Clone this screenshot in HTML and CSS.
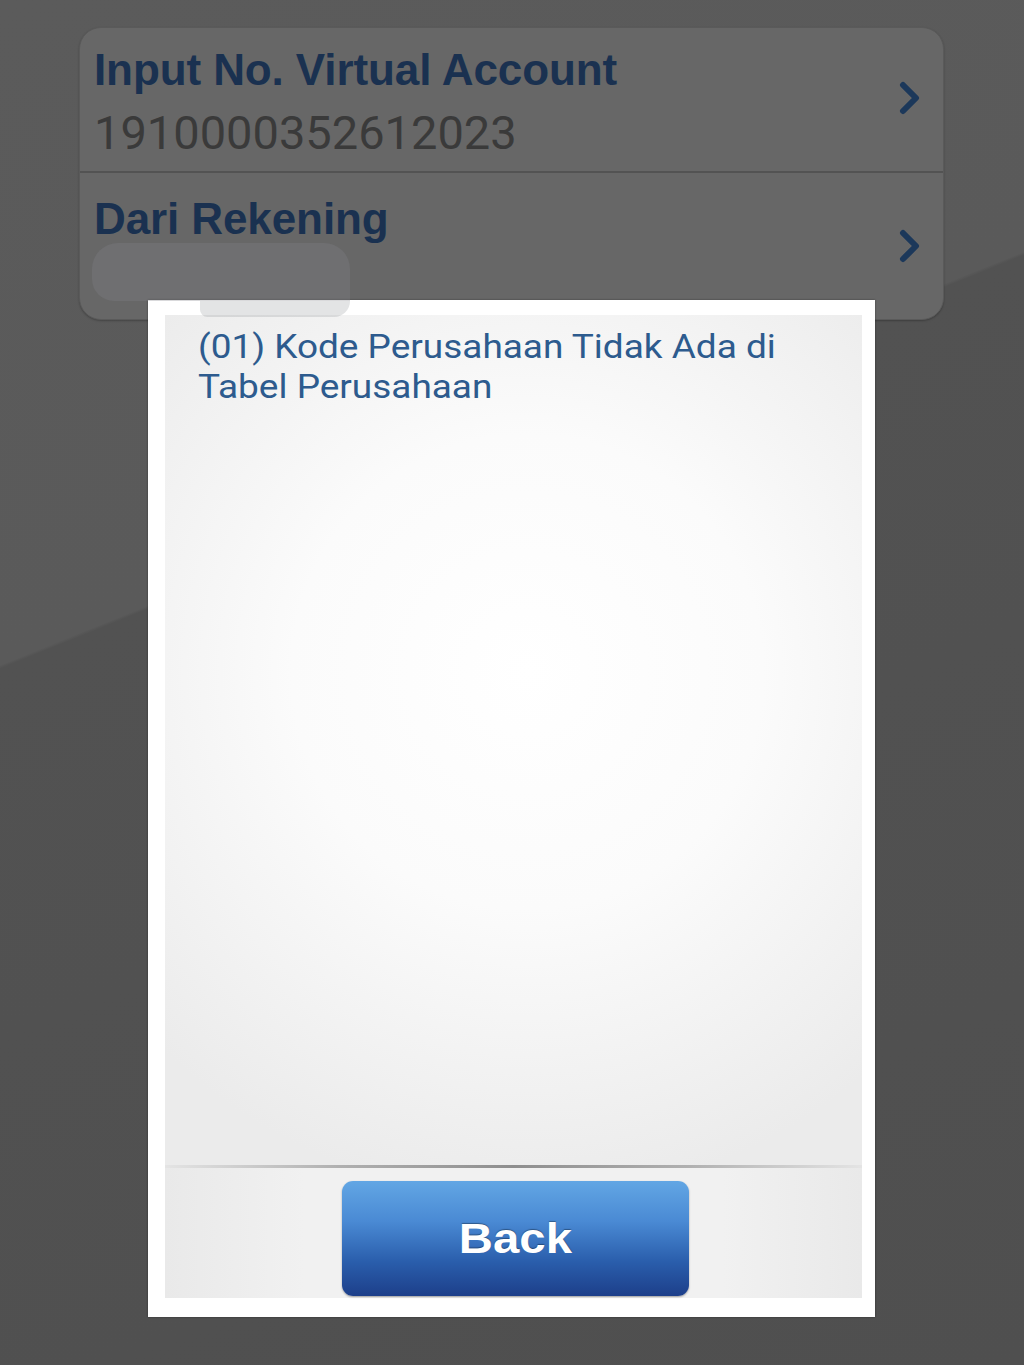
FILE: index.html
```html
<!DOCTYPE html>
<html lang="id">
<head>
<meta charset="utf-8">
<title>Virtual Account</title>
<link rel="stylesheet" href="styles.css">
</head>
<body>
<div class="screen">
  <div class="card">
    <div class="row row-first">
      <div class="row-text">
        <div class="row-title">Input No. Virtual Account</div>
        <div class="row-value">1910000352612023</div>
      </div>
      <svg class="chev" width="24" height="34" viewBox="0 0 24 34"><polyline points="5,4 18,17 5,30" fill="none" stroke="#1c385a" stroke-width="6" stroke-linecap="round" stroke-linejoin="round"/></svg>
    </div>
    <div class="row row-second">
      <div class="row-text">
        <div class="row-title">Dari Rekening</div>
        <div class="row-value row-hidden">&nbsp;</div>
      </div>
      <svg class="chev" width="24" height="34" viewBox="0 0 24 34"><polyline points="5,4 18,17 5,30" fill="none" stroke="#1c385a" stroke-width="6" stroke-linecap="round" stroke-linejoin="round"/></svg>
    </div>
  </div>

  <div class="modal">
    <div class="panel">
      <div class="message">
        <p class="msg-text">(01) Kode Perusahaan Tidak Ada di<br>Tabel Perusahaan</p>
      </div>
      <div class="sep"></div>
      <div class="footer">
        <button class="back-btn" type="button"><span class="back-label">Back</span></button>
      </div>
    </div>
  </div>

  <div class="redact redact-main"></div>
  <div class="redact redact-tail"></div>
</div>
</body>
</html>
```

FILE: styles.css
```css
html, body {
  margin: 0;
  padding: 0;
}

body {
  width: 1024px;
  height: 1365px;
  overflow: hidden;
  font-family: "Liberation Sans", Arial, sans-serif;
}

.screen {
  position: relative;
  width: 1024px;
  height: 1365px;
  overflow: hidden;
  background: linear-gradient(158deg, #5b5b5b 0%, #5a5a5a 37.4%, #525252 37.6%, #4f4f4f 100%);
  padding-top: 27px;
  box-sizing: border-box;
}

.card {
  margin-left: 79px;
  width: 865px;
  height: 293px;
  box-sizing: border-box;
  background: #676767;
  border: 1px solid #5a5a5a;
  border-radius: 22px;
  box-shadow: 0 1px 2px rgba(0, 0, 0, 0.25);
  overflow: hidden;
}

.row {
  display: flex;
  justify-content: space-between;
  align-items: flex-start;
  padding-left: 14px;
  padding-right: 21px;
  box-sizing: border-box;
}

.row-first {
  height: 145px;
  border-bottom: 2px solid #535353;
  padding-top: 16px;
}

.row-first .chev {
  margin-top: 37px;
}

.row-second {
  height: 146px;
  padding-top: 20px;
}

.row-second .chev {
  margin-top: 36px;
}

.row-text {
  display: flex;
  flex-direction: column;
}

.row-title {
  font-family: "Liberation Sans", Arial, sans-serif;
  font-weight: bold;
  font-size: 44px;
  line-height: 52px;
  color: #1a3150;
  letter-spacing: -0.1px;
}

.row-value {
  margin-top: 9px;
  font-family: Roboto, "Noto Sans", sans-serif;
  font-size: 47px;
  line-height: 56px;
  color: #3a3a3a;
}

.chev {
  display: block;
  flex-shrink: 0;
}

.modal {
  position: absolute;
  left: 148px;
  top: 300px;
  width: 727px;
  height: 1017px;
  box-sizing: border-box;
  padding: 15px 13px 19px 17px;
  background: #ffffff;
  display: flex;
  flex-direction: column;
  box-shadow: 0 0 2px rgba(0, 0, 0, 0.4);
}

.panel {
  flex: 1;
  display: flex;
  flex-direction: column;
}

.message {
  height: 850px;
  box-sizing: border-box;
  padding: 12px 30px 0 33px;
  background: radial-gradient(ellipse 75% 62% at 52% 42%, #ffffff 0%, #fbfbfb 45%, #ebebeb 100%);
}

.msg-text {
  margin: 0;
  font-family: Roboto, "Noto Sans", sans-serif;
  font-size: 33px;
  line-height: 40px;
  color: #2d5b8e;
  white-space: nowrap;
  transform: scaleX(1.12);
  transform-origin: left top;
}

.sep {
  height: 3px;
  background: linear-gradient(90deg, #e4e4e4 0%, #b0b0b0 25%, #8e8e8e 50%, #b0b0b0 75%, #e4e4e4 100%);
}

.footer {
  height: 130px;
  box-sizing: border-box;
  padding-top: 13px;
  display: flex;
  justify-content: center;
  background: linear-gradient(90deg, #e9e9e9 0%, #f1f1f1 20%, #f1f1f1 80%, #e9e9e9 100%);
}

.back-btn {
  width: 347px;
  height: 115px;
  margin-left: 4px;
  border: none;
  border-radius: 11px;
  background: linear-gradient(180deg, #62a6e4 0%, #4a8ad4 35%, #2a5eac 70%, #1d3f8a 100%);
  box-shadow: 0 1px 2px rgba(0, 0, 0, 0.35);
  color: #ffffff;
  font-family: "Liberation Sans", Arial, sans-serif;
  font-weight: bold;
  font-size: 43px;
  text-shadow: 0 -1px 1px rgba(0, 0, 0, 0.35);
  padding: 0;
  display: flex;
  align-items: center;
  justify-content: center;
}

.back-label {
  display: inline-block;
  transform: scaleX(1.1);
}

.redact {
  position: absolute;
  background: rgba(128, 130, 136, 0.3);
}

.redact-main {
  left: 92px;
  top: 243px;
  width: 258px;
  height: 58px;
  border-radius: 26px 26px 0 22px;
}

.redact-tail {
  left: 200px;
  top: 301px;
  width: 150px;
  height: 16px;
  border-radius: 0 0 30px 14px;
  background: rgba(128, 130, 136, 0.22);
}
```
